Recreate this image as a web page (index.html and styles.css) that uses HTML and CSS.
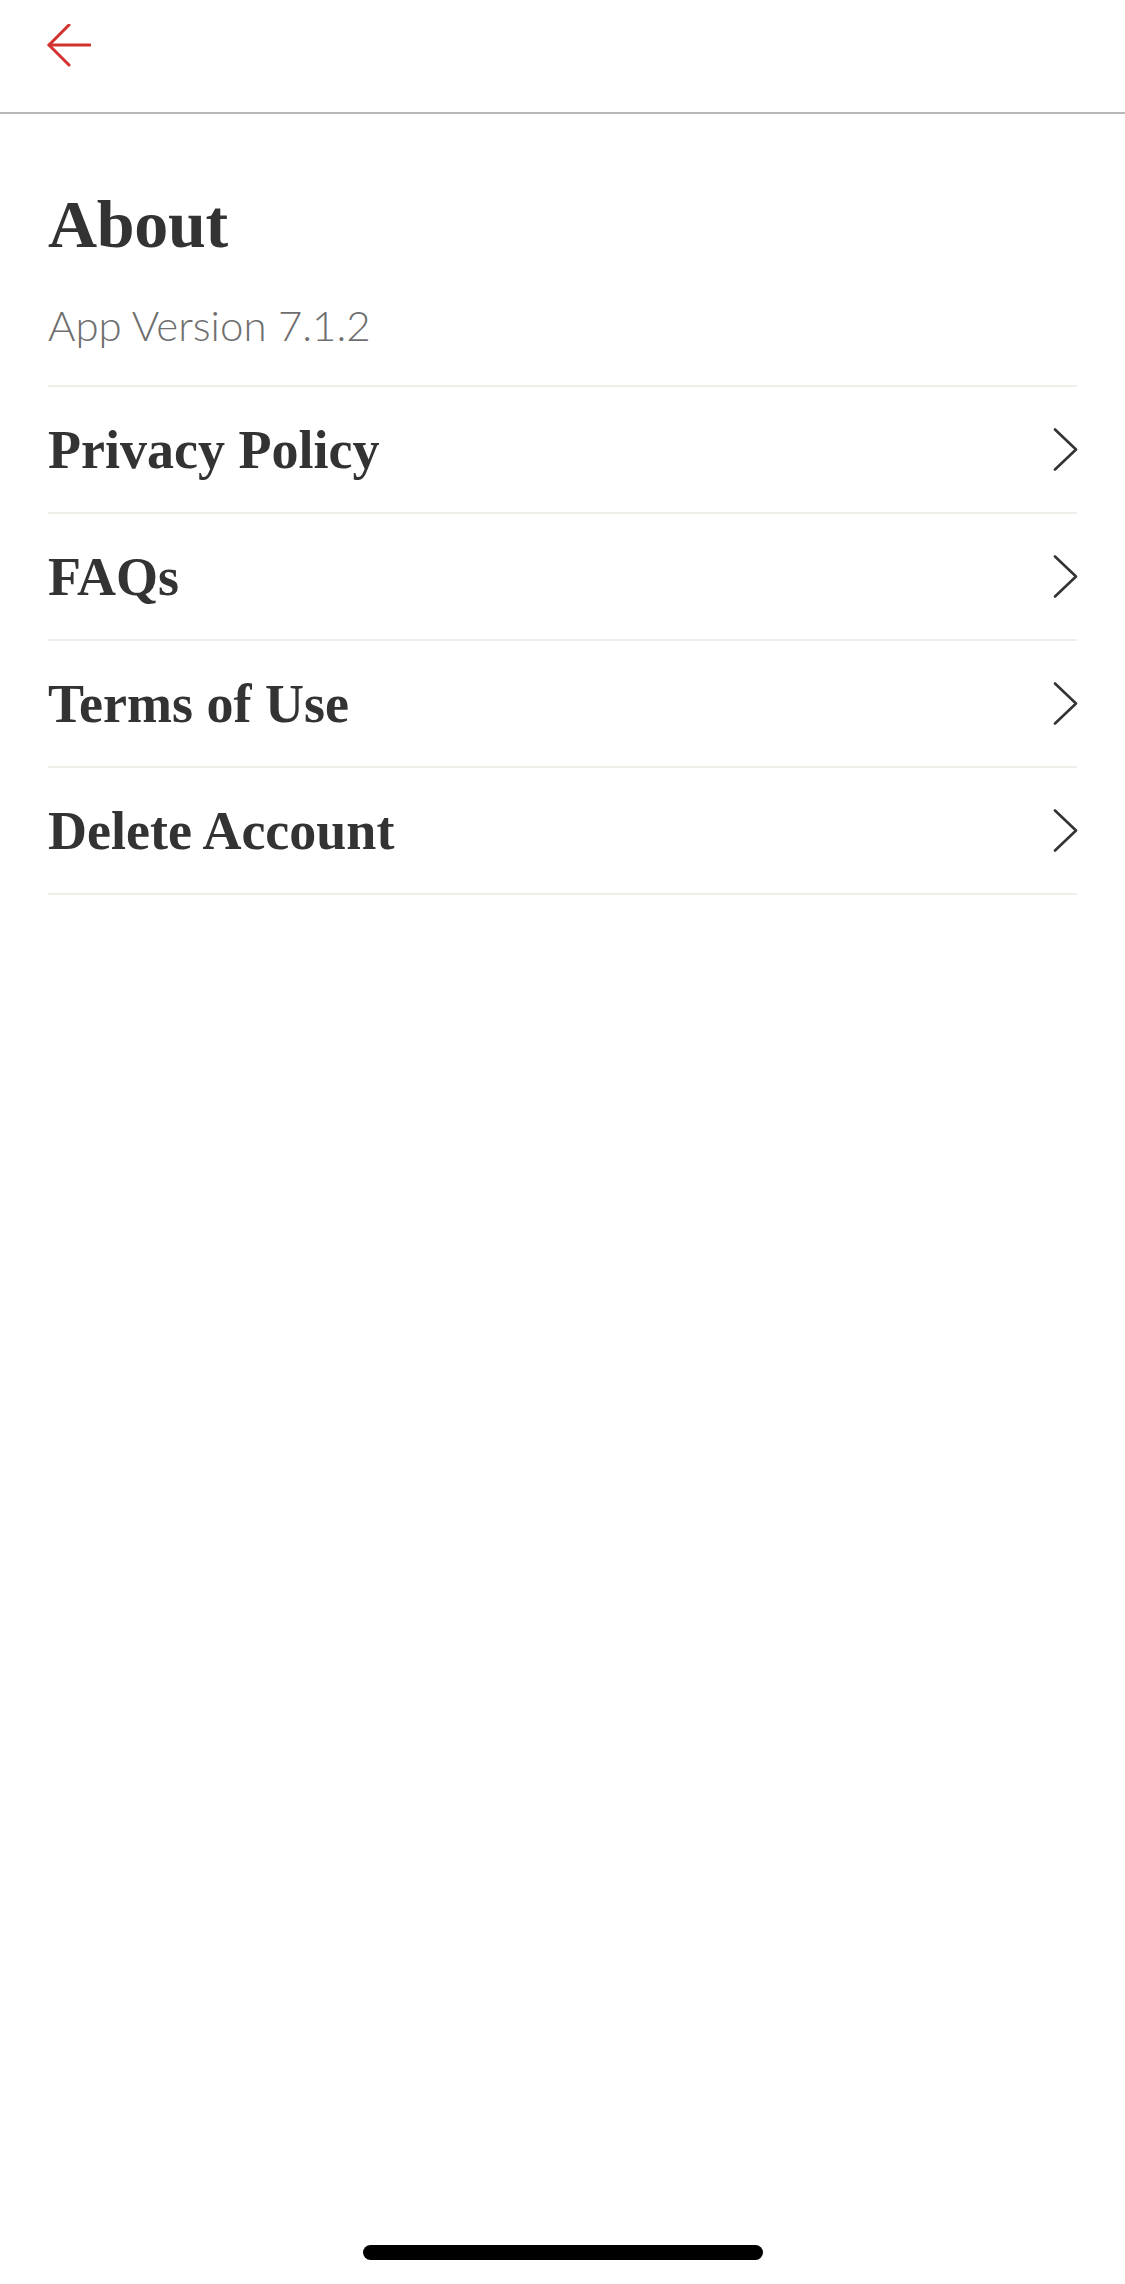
FILE: index.html
```html
<!DOCTYPE html>
<html lang="en">
<head>
<meta charset="utf-8">
<title>About</title>
<link rel="stylesheet" href="styles.css">
</head>
<body>
<div class="screen">
  <header class="topbar">
    <button class="back" aria-label="Back">
      <svg width="44" height="44" viewBox="0 0 44 44" fill="none" stroke="#d2322d" stroke-width="3" stroke-linecap="round" stroke-linejoin="round">
        <path d="M43 21H2"/>
        <path d="M22 1L2 21L22 41"/>
      </svg>
    </button>
  </header>
  <main class="content">
    <h1 class="title">About</h1>
    <p class="version">App Version 7.1.2</p>
    <ul class="menu">
      <li class="menu-item"><span class="label">Privacy Policy</span><svg class="chev" width="25" height="43" viewBox="0 0 25 43" fill="none" stroke="#333" stroke-width="2.6" stroke-linecap="round" stroke-linejoin="round"><path d="M2 1.5L23 21.5L2 41.5"/></svg></li>
      <li class="menu-item"><span class="label">FAQs</span><svg class="chev" width="25" height="43" viewBox="0 0 25 43" fill="none" stroke="#333" stroke-width="2.6" stroke-linecap="round" stroke-linejoin="round"><path d="M2 1.5L23 21.5L2 41.5"/></svg></li>
      <li class="menu-item"><span class="label">Terms of Use</span><svg class="chev" width="25" height="43" viewBox="0 0 25 43" fill="none" stroke="#333" stroke-width="2.6" stroke-linecap="round" stroke-linejoin="round"><path d="M2 1.5L23 21.5L2 41.5"/></svg></li>
      <li class="menu-item"><span class="label">Delete Account</span><svg class="chev" width="25" height="43" viewBox="0 0 25 43" fill="none" stroke="#333" stroke-width="2.6" stroke-linecap="round" stroke-linejoin="round"><path d="M2 1.5L23 21.5L2 41.5"/></svg></li>
    </ul>
  </main>
  <div class="home-indicator"></div>
</div>
</body>
</html>
```
FILE: styles.css
```css
* { box-sizing: border-box; }
html, body {
  margin: 0;
  padding: 0;
  background: #ffffff;
}
.screen {
  position: relative;
  width: 1125px;
  min-height: 2284px;
  background: #ffffff;
}
.topbar {
  height: 114px;
  border-bottom: 2px solid #b8b8b8;
  padding: 24px 0 0 47px;
  background: #ffffff;
}
.back {
  display: block;
  padding: 0;
  margin: 0;
  border: 0;
  background: none;
  width: 44px;
  height: 44px;
}
.back svg { display: block; }
.content {
  padding: 0 48px;
}
.title {
  margin: 70px 0 0;
  font-family: "Liberation Serif", "Times New Roman", serif;
  font-weight: 700;
  font-size: 68px;
  line-height: 80px;
  color: #333333;
  letter-spacing: -0.3px;
}
.version {
  margin: 36px 0 0;
  font-family: Lato, "Open Sans", sans-serif;
  font-weight: 300;
  font-size: 42px;
  line-height: 50px;
  color: #6e6e6e;
}
.menu {
  list-style: none;
  margin: 35px 0 0;
  padding: 0;
  border-bottom: 2px solid #efefe9;
}
.menu-item {
  display: flex;
  align-items: center;
  justify-content: space-between;
  height: 127px;
  border-top: 2px solid #efefe9;
}
.label {
  font-family: "Liberation Serif", "Times New Roman", serif;
  font-weight: 700;
  font-size: 54px;
  line-height: 62px;
  color: #333333;
}
.chev {
  display: block;
  margin-right: -1px;
}
.home-indicator {
  position: absolute;
  left: 363px;
  bottom: 24px;
  width: 400px;
  height: 15px;
  border-radius: 8px;
  background: #000000;
}
```
